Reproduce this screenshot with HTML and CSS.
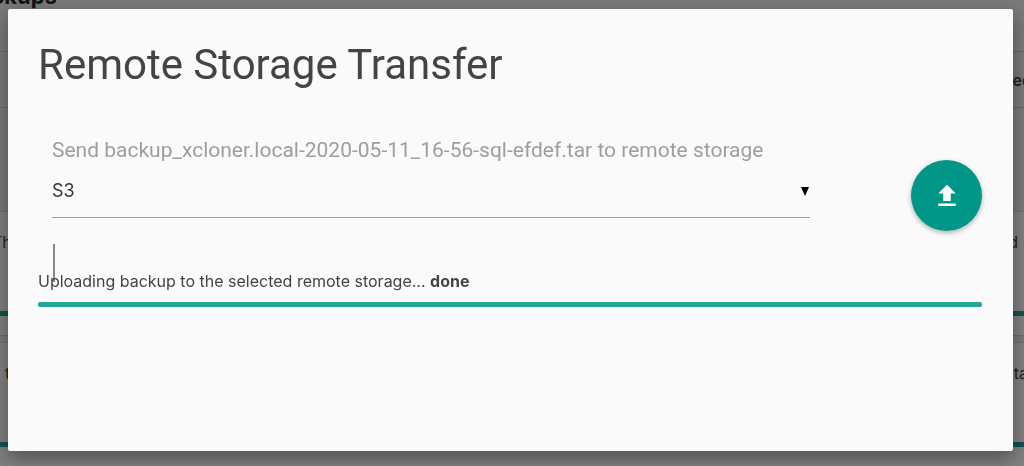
FILE: index.html
```
<!DOCTYPE html>
<html lang="en">
<head>
  <meta charset="UTF-8">
  <title>Remote Storage Transfer</title>
  <link rel="stylesheet" href="styles.css">
</head>
<body>
  <!-- Backup list behind the dialog -->
  <div class="backups">
    <h2 class="backups-title">Backups</h2>
    <div class="backups-head"><span></span><span>Created</span></div>
    <div class="backups-filter"></div>
    <div class="backups-row">
      <div class="row-text"><span>Th</span><span>d</span></div>
      <div class="row-bar"></div>
    </div>
    <div class="backups-gap"></div>
    <div class="backups-row">
      <div class="row-text"><span class="indent">t</span><span class="cut">ta</span></div>
      <div class="row-bar"></div>
    </div>
    <div class="backups-foot"></div>
  </div>

  <!-- Dialog -->
  <div class="overlay">
    <div class="modal" role="dialog" aria-labelledby="modal-title">
      <h1 id="modal-title">Remote Storage Transfer</h1>
      <form class="transfer-form">
        <div class="field">
          <label for="storage">Send backup_xcloner.local-2020-05-11_16-56-sql-efdef.tar to remote storage</label>
          <div class="select-wrap">
            <select id="storage">
              <option>S3</option>
            </select>
            <svg class="arrow" viewBox="0 0 10 9" aria-hidden="true"><path d="M1 0h8L5 9z"/></svg>
          </div>
        </div>
        <button type="button" class="upload-btn" aria-label="Upload">
          <svg viewBox="0 0 24 24" aria-hidden="true"><path d="M9 16h6v-6h4l-7-7-7 7h4zm-4 2h14v2H5z"/></svg>
        </button>
      </form>
      <div class="marker"></div>
      <p class="status">Uploading backup to the selected remote storage... <strong>done</strong></p>
      <div class="progress"></div>
    </div>
  </div>
</body>
</html>
```

FILE: styles.css
```
* {
  box-sizing: border-box;
}

body {
  margin: 0;
  min-height: 100vh;
  background: #f1f1f1;
  color: #444;
  font-family: Inter, "Liberation Sans", sans-serif;
  font-size: 16px;
  overflow: hidden;
}

/* Backup list */
.backups {
  margin: 0 -8px;
}

.backups-title {
  height: 51px;
  margin: -14px 0 14px -28px;
  font-size: 22px;
  line-height: 20px;
  color: #23282d;
}

.backups-head,
.row-text {
  display: flex;
  justify-content: space-between;
}

.backups-head {
  height: 57px;
  align-items: center;
  border-top: 1px solid #d0d0d0;
  border-bottom: 1px solid #d0d0d0;
  font-weight: 600;
}

.backups-filter {
  height: 103px;
}

.backups-row {
  display: flow-root;
  padding-top: 20px;
  background: #fff;
  border-top: 1px solid #e0e0e0;
}

.row-text {
  height: 79px;
  padding-right: 14px;
  line-height: 20px;
}

.indent {
  padding-left: 13px;
}

.cut {
  margin-right: -10px;
}

.row-bar {
  height: 5px;
  margin-bottom: 19px;
  background: #26a69a;
}

.backups-gap {
  height: 7px;
  border-top: 1px solid #d0d0d0;
}

.backups-foot {
  border-top: 1px solid #d0d0d0;
}

/* Dialog */
.overlay {
  position: fixed;
  inset: 0;
  display: flex;
  padding: 9px 11px 15px 8px;
  background: rgba(0, 0, 0, 0.5);
}

.modal {
  flex: 1;
  padding: 31px 31px 24px 30px;
  background: #fafafa;
  border-radius: 2px;
  box-shadow: 0 8px 17px rgba(0, 0, 0, 0.2), 0 6px 20px rgba(0, 0, 0, 0.2);
}

.modal h1 {
  margin: 0 0 44px;
  font-family: Roboto, "Liberation Sans", sans-serif;
  font-size: 42px;
  line-height: 50px;
  font-weight: 400;
}

.transfer-form {
  display: flex;
  justify-content: space-between;
  align-items: flex-start;
}

.field {
  flex: 0 1 772px;
  padding-left: 14px;
}

.field label {
  display: block;
  color: #9e9e9e;
  font-family: Roboto, "Liberation Sans", sans-serif;
  font-size: 21px;
  line-height: 32px;
  white-space: nowrap;
}

.select-wrap {
  display: flex;
  align-items: center;
  border-bottom: 1px solid #9e9e9e;
}

.select-wrap select {
  flex: 1;
  height: 48px;
  margin-bottom: 3px;
  padding: 0;
  border: 0;
  background: transparent;
  color: #32373c;
  font: inherit;
  font-size: 18px;
  appearance: none;
}

.arrow {
  width: 10px;
  height: 9px;
}

.upload-btn {
  width: 71px;
  height: 71px;
  margin-top: 26px;
  padding: 0;
  border: 0;
  border-radius: 50%;
  background: #009688;
  box-shadow: 0 2px 5px rgba(0, 0, 0, 0.3);
}

.upload-btn svg {
  display: block;
  width: 30px;
  margin: auto;
  fill: #fff;
}

.marker {
  width: 2px;
  height: 38px;
  margin: 13px 0 -12px 15px;
  background: #7e8993;
}

.status {
  margin: 0 0 10px;
  line-height: 22px;
}

.progress {
  height: 5px;
  border-radius: 2px;
  background: #26a69a;
}
```
